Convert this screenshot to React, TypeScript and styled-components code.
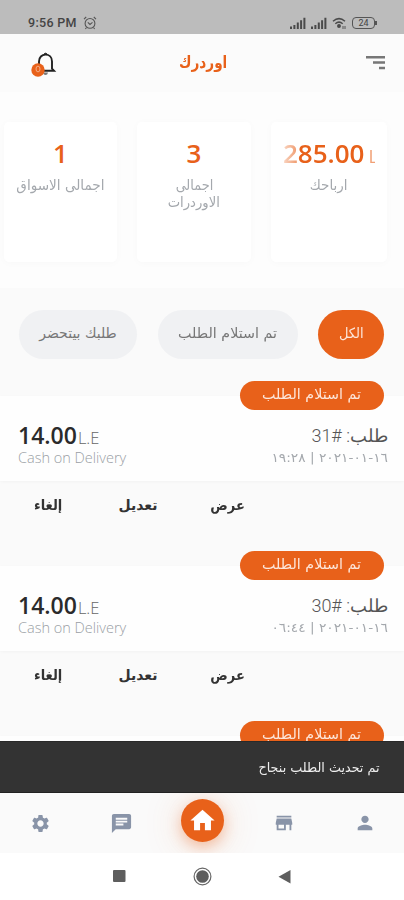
import React from "react";
import styled, { createGlobalStyle } from "styled-components";
import { MdSettings, MdChat, MdStore, MdPerson, MdHome } from "react-icons/md";

const ORANGE = "#e8611a";

const GlobalStyle = createGlobalStyle`
  * { box-sizing: border-box; }
  html, body { margin: 0; background: #fff; overflow: hidden; }
  body { font-family: "Open Sans", "DejaVu Sans", sans-serif; }
`;

const Screen = styled.div`
  width: 404px;
  height: 900px;
  overflow: hidden;
  display: flex;
  flex-direction: column;
  background: #fafafa;
`;

const StatusBar = styled.div`
  height: 34px;
  flex: none;
  display: flex;
  align-items: center;
  padding: 11px 27px 0 28px;
  background: #bcbcbc;
  color: #444;
`;

const Clock = styled.span`
  font: 500 12.5px/24px Roboto, sans-serif;
  letter-spacing: 0.3px;
  margin-right: 6px;
`;

const StatusIcons = styled.div`
  margin-left: auto;
  display: flex;
  align-items: center;
  gap: 5px;
`;

const Header = styled.header`
  height: 58px;
  flex: none;
  display: grid;
  grid-template-columns: 1fr auto 1fr;
  align-items: center;
  padding: 0 18px 0 30px;
  background: #fbfbfb;
  > :first-child { margin-top: 2px; }
  > :last-child { justify-self: end; }
`;

const Title = styled.h1`
  width: 50px;
  margin: -2px 9px 0 0;
  display: flex;
  justify-content: center;
`;

const Arabic = styled.span<{ $size: number; $color: string; $stretch?: number; $bold?: boolean; $origin?: string }>`
  display: block;
  direction: rtl;
  white-space: nowrap;
  font-family: "DejaVu Sans", sans-serif;
  font-size: ${(p) => p.$size}px;
  font-weight: ${(p) => (p.$bold ? 700 : 400)};
  line-height: 17px;
  color: ${(p) => p.$color};
  transform: scaleX(${(p) => p.$stretch ?? 1});
  transform-origin: ${(p) => p.$origin ?? "center"};
`;

const Stats = styled.section`
  height: 196px;
  flex: none;
  display: grid;
  grid-template-columns: 113px 114px 116px;
  column-gap: 20px;
  padding: 30px 0 26px 4px;
  background: #fdfdfd;
`;

const StatCard = styled.div`
  height: 140px;
  display: flex;
  flex-direction: column;
  align-items: center;
  padding-top: 14px;
  background: #fff;
  border-radius: 5px;
  box-shadow: 0 1px 9px rgba(0, 0, 0, 0.025);
`;

const StatLabel = styled.div`
  display: flex;
  flex-direction: column;
  align-items: center;
`;

const StatValue = styled.div<{ $faded?: boolean }>`
  width: 92px;
  height: 34px;
  margin: 0 0 7px;
  overflow: hidden;
  white-space: nowrap;
  text-align: ${(p) => (p.$faded ? "left" : "center")};
  color: ${ORANGE};
  font-weight: 600;
  font-size: 26px;
  line-height: 34px;
  ${(p) => p.$faded && "mask-image: linear-gradient(90deg, rgba(0,0,0,.25), rgba(0,0,0,.6) 13px, #000 17px, #000 84px, rgba(0,0,0,.6) 86px);"}
`;

const StatUnit = styled.span`
  margin-left: 4px;
  font-size: 18px;
  font-weight: 400;
`;

const Filters = styled.section`
  height: 108px;
  flex: none;
  display: flex;
  align-items: flex-start;
  justify-content: space-between;
  padding: 22px 20px 0 19px;
  background: #fafafa;
`;

const Chip = styled.button<{ $width: number; $active?: boolean }>`
  width: ${(p) => p.$width}px;
  height: 49px;
  display: flex;
  align-items: center;
  justify-content: center;
  padding: 0 0 2px;
  border: 0;
  border-radius: 25px;
  background: ${(p) => (p.$active ? ORANGE : "#f0f1f3")};
`;

const Orders = styled.main`
  flex: 1;
  min-height: 0;
  clip-path: inset(-20px 0 0 0);
`;

const Order = styled.article`
  height: 170px;
`;

const Summary = styled.div`
  height: 85px;
  display: flex;
  flex-direction: column;
  background: #fefefe;
  box-shadow: 0 1px 3px rgba(0, 0, 0, 0.03);
`;

const Tag = styled.div`
  flex: none;
  align-self: flex-end;
  width: 144px;
  height: 29px;
  margin: -15px 20px 0 0;
  padding-bottom: 2px;
  display: flex;
  align-items: center;
  justify-content: center;
  border-radius: 15px;
  background: ${ORANGE};
`;

const SummaryRow = styled.div`
  display: flex;
  justify-content: space-between;
  padding: 11px 16px 0 18px;
`;

const Price = styled.div`
  height: 28px;
  display: flex;
  align-items: baseline;
  color: #2b2b2b;
  font-size: 23px;
  font-weight: 600;
  line-height: 28px;
`;

const Currency = styled.span`
  margin-left: 1px;
  color: #666;
  font-size: 16.5px;
  font-weight: 300;
`;

const Payment = styled.div`
  color: #9a9fa5;
  font-size: 14.5px;
  font-weight: 300;
  line-height: 18px;
  white-space: nowrap;
`;

const OrderInfo = styled.div`
  display: flex;
  flex-direction: column;
  align-items: flex-end;
  padding-top: 6px;
`;

const OrderTitle = styled.div`
  direction: rtl;
  color: #555;
  font: 300 18px/18px Roboto, "DejaVu Sans", sans-serif;
  white-space: nowrap;
`;

const Stamp = styled.div`
  direction: ltr;
  unicode-bidi: bidi-override;
  margin-top: 4px;
  font: 400 12.5px/18px "DejaVu Sans", sans-serif;
  color: #a4a8ad;
  white-space: nowrap;
  transform: scaleX(1.1);
  transform-origin: right;
`;

const Actions = styled.div`
  height: 85px;
  display: grid;
  grid-template-columns: 80px 80px 80px;
  column-gap: 10px;
  justify-items: center;
  padding: 16px 0 0 8px;
`;

const Snackbar = styled.div`
  height: 52px;
  flex: none;
  display: flex;
  align-items: center;
  justify-content: flex-end;
  padding-right: 25px;
  background: #333;
  border-top: 1px solid #292929;
  border-bottom: 1px solid #222;
`;

const TabBar = styled.nav`
  height: 60px;
  flex: none;
  display: grid;
  grid-template-columns: repeat(5, 81px);
  justify-items: center;
  align-items: center;
  overflow: hidden;
  background: #fafafa;
  color: #8994a8;
`;

const HomeButton = styled.div`
  width: 43px;
  height: 43px;
  margin-bottom: 6px;
  display: flex;
  align-items: center;
  justify-content: center;
  border-radius: 50%;
  background: ${ORANGE};
  color: #fff;
  box-shadow: 0 5px 14px rgba(232, 97, 26, 0.35), 0 3px 40px rgba(232, 97, 26, 0.2);
`;

const SystemBar = styled.div`
  height: 47px;
  flex: none;
  display: flex;
  align-items: center;
  justify-content: space-between;
  padding: 0 112px;
  background: #fff;
`;

const AlarmIcon = () => (
  <svg width="14" height="14" viewBox="0 0 14 14" fill="none" stroke="#555" strokeWidth="1.1">
    <circle cx="7" cy="7.4" r="4.9" />
    <path d="M1 3.2 3.2 1M13 3.2 10.8 1M4.8 6.3 7 8.4l2.5-2M3.5 11.5 2.4 13M10.5 11.5l1.1 1.5" />
  </svg>
);

const SignalIcon = () => (
  <svg width="16" height="12" viewBox="0 0 16 12" fill="#4a4a4a">
    <path d="M0 9.5h2V12H0zM3.4 8h2v4h-2zM6.8 5.5h2V12h-2zM10.1 3.3h2V12h-2zM13.4 .8h2V12h-2z" />
  </svg>
);

const WifiIcon = () => (
  <svg width="15" height="12" viewBox="0 0 15 12" fill="none" stroke="#4a4a4a" strokeWidth="1.5">
    <path d="M1 4.2Q7 -1 13 4.2M3.3 6.7Q7 3.6 10.7 6.7" />
    <circle cx="7" cy="9" r="1.2" fill="#444" />
    <path d="M11 9v3M13 9v3" strokeWidth=".9" />
  </svg>
);

const BatteryShell = styled.div`
  display: flex;
  align-items: center;
  &::after {
    content: "";
    width: 2px;
    height: 4px;
    background: #555;
  }
`;

const BatteryLevel = styled.div`
  width: 23px;
  height: 12px;
  border: 1.5px solid #555;
  border-radius: 4px;
  font: 400 9px/10px Roboto, sans-serif;
  text-align: center;
`;

const BellIcon = () => (
  <svg width="27" height="28" viewBox="0 0 27 28" fill="none">
    <path d="M9 20.5V11.5C9 7.3 11.8 4.6 15.5 4.6S22 7.3 22 11.5v7.2l2 2H9" stroke="#222" strokeWidth="1.9" />
    <path d="M13.9 4.5a1.7 1.7 0 0 1 3.3 0z" fill="#222" stroke="#222" />
    <path d="M13 22.5h5q-.5 2.5-2.5 2.5T13 22.5z" fill="#777" />
    <circle cx="8" cy="20" r="6.7" fill={ORANGE} />
    <ellipse cx="8" cy="19" rx="2" ry="2.9" stroke="#f4ad87" strokeWidth="1" />
  </svg>
);

const MenuIcon = () => (
  <svg width="20" height="14" viewBox="0 0 20 14" fill="#777">
    <path d="M0 0h19v2.6H0zM7 5.3h12v2.5H7zM13 10.8h6v2.4h-6z" />
  </svg>
);

const RecentsIcon = () => (
  <svg width="14" height="14" viewBox="0 0 14 14"><rect x="1" y="0" width="12.5" height="12" rx="1" fill="#5e5e5e" /></svg>
);

const SystemHomeIcon = () => (
  <svg width="20" height="20" viewBox="0 0 20 20">
    <circle cx="10.5" cy="9.5" r="8.4" fill="none" stroke="#666" strokeWidth="1.2" />
    <circle cx="10.5" cy="9.5" r="6.3" fill="#5e5e5e" />
  </svg>
);

const BackIcon = () => (
  <svg width="14" height="14" viewBox="0 0 14 14"><path d="M12.5 0v13.5L.5 6.8z" fill="#5e5e5e" /></svg>
);

const orders = [
  { id: 31, stamp: "١٩:٢٨ | ٢٠٢١-٠١-١٦" },
  { id: 30, stamp: "٠٦:٤٤ | ٢٠٢١-٠١-١٦" },
];

const StatusTag = () => (
  <Tag><Arabic $size={14} $color="#fde6da" $stretch={1.02}>تم استلام الطلب</Arabic></Tag>
);

export default function App() {
  return (
    <Screen>
      <GlobalStyle />
      <StatusBar>
        <Clock>9:56 PM</Clock>
        <AlarmIcon />
        <StatusIcons>
          <SignalIcon />
          <SignalIcon />
          <WifiIcon />
          <BatteryShell><BatteryLevel>24</BatteryLevel></BatteryShell>
        </StatusIcons>
      </StatusBar>
      <Header>
        <BellIcon />
        <Title><Arabic $size={17} $color={ORANGE} $bold $stretch={0.8}>اوردرك</Arabic></Title>
        <MenuIcon />
      </Header>
      <Stats>
        <StatCard>
          <StatValue>1</StatValue>
          <StatLabel><Arabic $size={14} $color="#a4a8ad" $stretch={0.97}>اجمالى الاسواق</Arabic></StatLabel>
        </StatCard>
        <StatCard>
          <StatValue>3</StatValue>
          <StatLabel>
            <Arabic $size={14} $color="#a4a8ad" $stretch={0.92}>اجمالى</Arabic>
            <Arabic $size={14} $color="#a4a8ad" $stretch={0.94}>الاوردرات</Arabic>
          </StatLabel>
        </StatCard>
        <StatCard>
          <StatValue $faded>285.00<StatUnit>L.E</StatUnit></StatValue>
          <StatLabel><Arabic $size={14} $color="#a4a8ad" $stretch={0.96}>ارباحك</Arabic></StatLabel>
        </StatCard>
      </Stats>
      <Filters>
        <Chip $width={118}><Arabic $size={14} $color="#777">طلبك بيتحضر</Arabic></Chip>
        <Chip $width={140}><Arabic $size={14} $color="#777" $stretch={1.02}>تم استلام الطلب</Arabic></Chip>
        <Chip $width={66} $active><Arabic $size={14} $color="#fde6da" $stretch={0.93}>الكل</Arabic></Chip>
      </Filters>
      <Orders>
        {orders.map((o) => (
          <Order key={o.id}>
            <Summary>
              <StatusTag />
              <SummaryRow>
                <div>
                  <Price>14.00<Currency>L.E</Currency></Price>
                  <Payment>Cash on Delivery</Payment>
                </div>
                <OrderInfo>
                  <OrderTitle>طلب: #{o.id}</OrderTitle>
                  <Stamp>{o.stamp}</Stamp>
                </OrderInfo>
              </SummaryRow>
            </Summary>
            <Actions>
              <Arabic $size={14} $color="#333" $bold $stretch={0.93}>إلغاء</Arabic>
              <Arabic $size={14} $color="#333" $bold>تعديل</Arabic>
              <Arabic $size={14} $color="#333" $bold $stretch={0.93}>عرض</Arabic>
            </Actions>
          </Order>
        ))}
        <Summary>
          <StatusTag />
        </Summary>
      </Orders>
      <Snackbar><Arabic $size={13} $color="#eee" $stretch={0.98} $origin="right">تم تحديث الطلب بنجاح</Arabic></Snackbar>
      <TabBar>
        <MdSettings size={21} />
        <MdChat size={23} />
        <HomeButton><MdHome size={29} /></HomeButton>
        <MdStore size={22} />
        <MdPerson size={22} />
      </TabBar>
      <SystemBar>
        <RecentsIcon />
        <SystemHomeIcon />
        <BackIcon />
      </SystemBar>
    </Screen>
  );
}
